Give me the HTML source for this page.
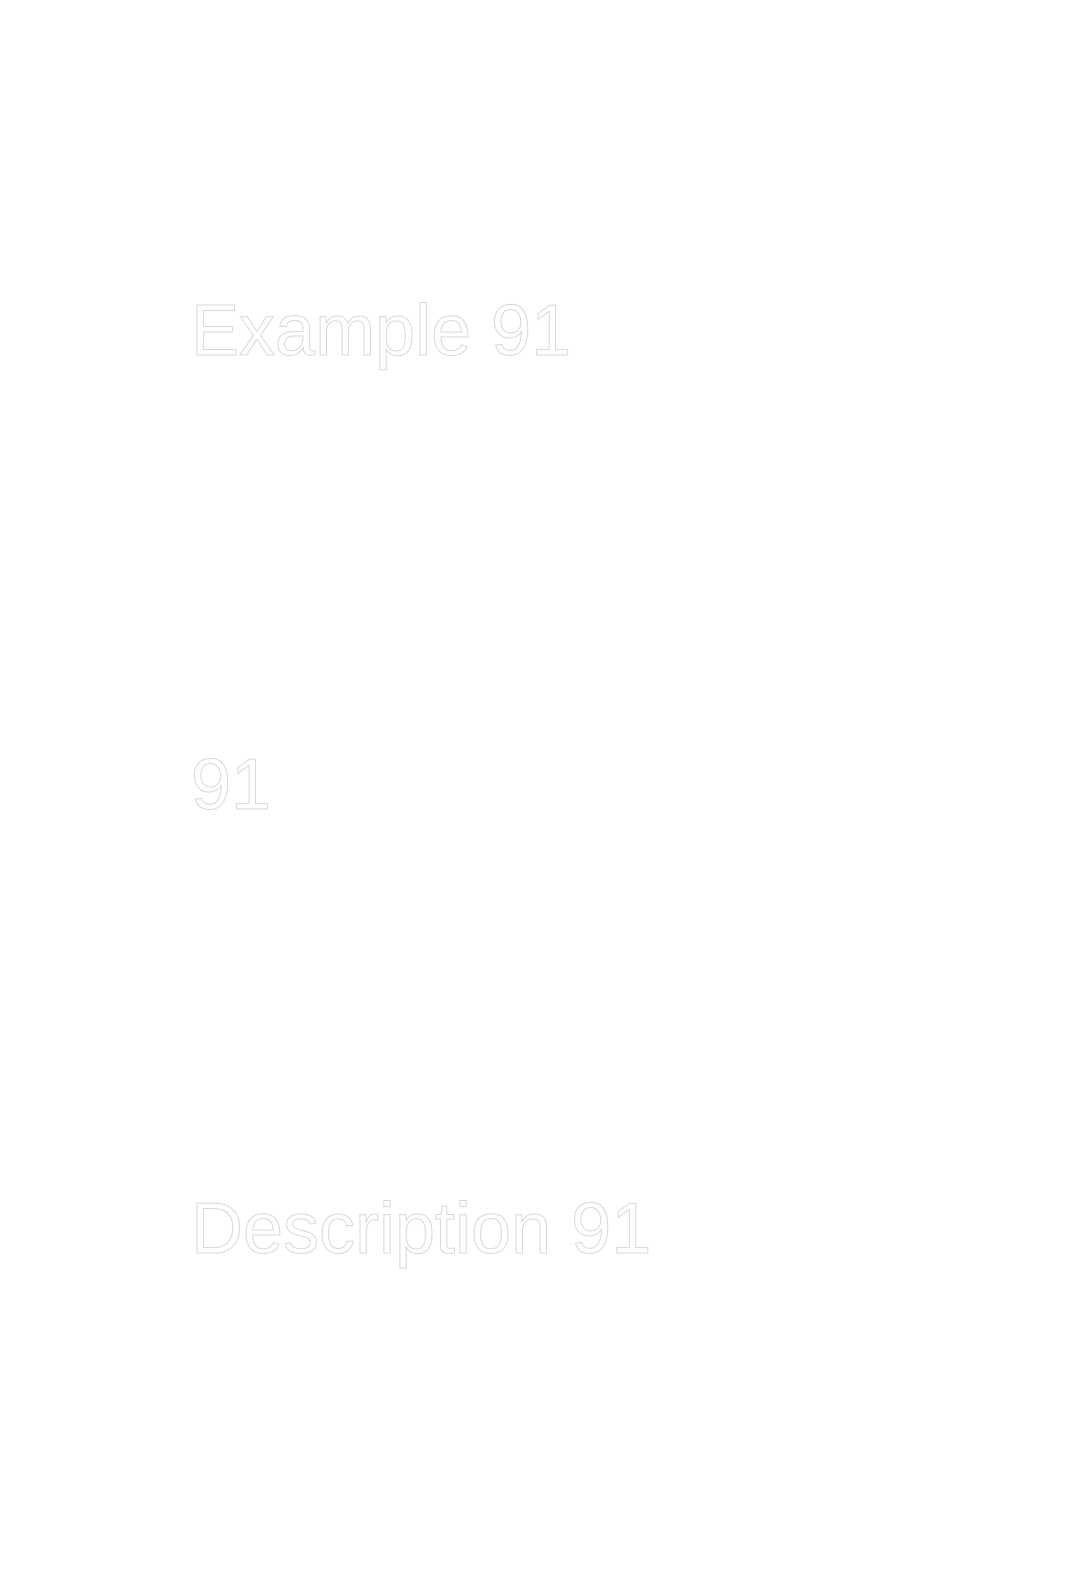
<!DOCTYPE html>
<html><head><meta charset="utf-8"><style>
html,body{margin:0;padding:0;background:#fff;width:1080px;height:1570px;overflow:hidden}
svg{display:block}
text{font-family:"Liberation Sans",sans-serif;font-size:72px;fill:#fff;stroke:#d8d8d8;stroke-width:1}
</style></head><body>
<svg width="1080" height="1570" xmlns="http://www.w3.org/2000/svg">
<text x="191" y="355">Example 91</text>
<text x="191" y="809">91</text>
<text x="191" y="1253">Description 91</text>
</svg>
</body></html>
